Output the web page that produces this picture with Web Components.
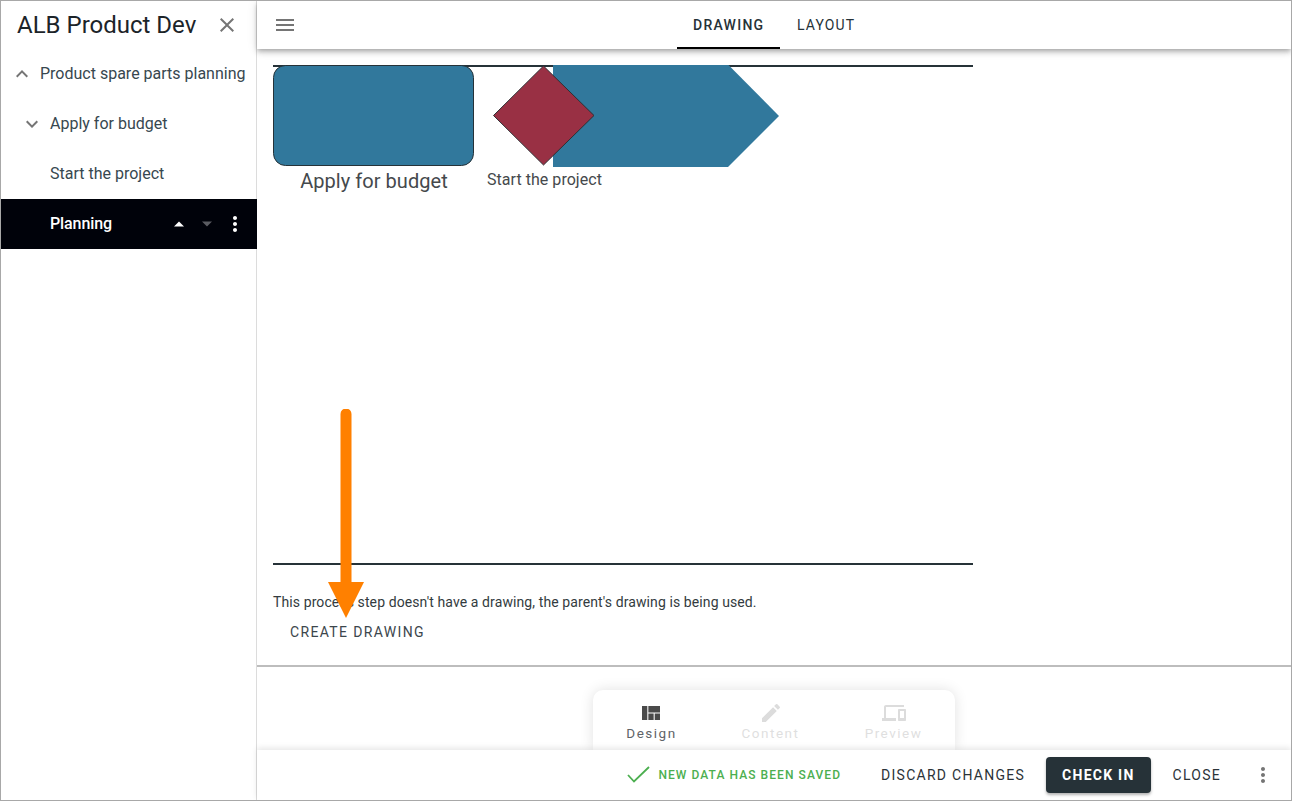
<!DOCTYPE html>
<html><head><meta charset="utf-8"><title>ALB Product Dev</title>
<style>
html,body{margin:0;padding:0;background:#fff;font-family:Roboto,"Liberation Sans",sans-serif;color:#263238}
</style></head><body>
<app-shell>
  <side-nav slot="side" heading="ALB Product Dev">
    <nav-row icon="up" indent="0">Product spare parts planning</nav-row>
    <nav-row icon="down" indent="1">Apply for budget</nav-row>
    <nav-row indent="1">Start the project</nav-row>
    <nav-row indent="1" active>Planning</nav-row>
  </side-nav>
  <top-bar slot="top"></top-bar>
  <drawing-pane slot="main"></drawing-pane>
  <mode-switch slot="modes"></mode-switch>
  <action-bar slot="actions"></action-bar>
</app-shell>
<script>
function def(name, css, html, setup){
  customElements.define(name, class extends HTMLElement{
    constructor(){super();const s=this.attachShadow({mode:'open'});s.innerHTML='<style>'+css+'</style>'+(typeof html==='function'?html(this):html);}
    connectedCallback(){ if(setup) setup(this); }
  });
}
def('app-shell',`
:host{display:flex;width:1292px;height:801px;box-sizing:border-box;border:1px solid #a8a8a8;overflow:hidden;background:#fff;position:relative}
.side{flex:0 0 256px;background:linear-gradient(#dcdcdc,#dcdcdc) right top/1px 100% no-repeat}
.body{flex:1;display:flex;flex-direction:column;min-width:0;position:relative}
.mid{flex:0 0 618px;position:relative}
.gap{flex:1;display:flex;justify-content:center;align-items:flex-end;position:relative}
.act{flex:0 0 50px;position:relative;z-index:2}
`,`<div class="side"><slot name="side"></slot></div>
<div class="body"><slot name="top"></slot><div class="mid"><slot name="main"></slot></div>
<div class="gap"><slot name="modes"></slot></div><div class="act"><slot name="actions"></slot></div></div>`);

def('side-nav',`
:host{display:block;height:100%}
header{display:flex;align-items:center;height:48px;padding-left:16px;padding-right:18px;justify-content:space-between}
h1{margin:0;font:400 24px/48px Roboto,sans-serif;color:#1c2429;letter-spacing:0}
svg{display:block}
`,el=>`<header><h1>${el.getAttribute('heading')}</h1>
<svg width="24" height="24" viewBox="0 0 24 24"><path fill="#757575" d="M19 6.41 17.59 5 12 10.59 6.41 5 5 6.41 10.59 12 5 17.59 6.41 19 12 13.41 17.59 19 19 17.59 13.41 12z"/></svg></header>
<div><slot></slot></div>`);

def('nav-row',`
:host{display:flex;align-items:center;height:50px;font:400 16px/24px Roboto,sans-serif;color:#37474f;position:relative;white-space:nowrap}
:host([active]){background:#00020a;color:#fff;font-weight:500;letter-spacing:-.1px}
.ic{width:24px;height:24px;flex:none;margin-right:6px}
svg{display:block}
.tools{margin-left:auto;display:flex;align-items:center;margin-right:10px}
`,el=>{
  const ind=+el.getAttribute('indent');
  const ic=el.getAttribute('icon');
  const pad=ind?19:9;
  const path=ic==='up'?'M7.41 15.41 12 10.83l4.59 4.58L18 14l-6-6-6 6z':'M7.41 8.59 12 13.17l4.59-4.58L18 10l-6 6-6-6z';
  const icon=ic?`<span class="ic"><svg width="24" height="24" viewBox="0 0 24 24"><path fill="#757575" d="${path}"/></svg></span>`:`<span style="width:30px;flex:none"></span>`;
  const tools=el.hasAttribute('active')?`<span class="tools">
  <svg width="22" height="24" viewBox="0 0 22 24"><path fill="#fff" d="M6 14.5l5-5 5 5z"/></svg>
  <svg width="22" height="24" viewBox="0 0 22 24" style="margin-left:6px"><path fill="#5a5c62" d="M6 9.5l5 5 5-5z"/></svg>
  <svg width="24" height="24" viewBox="0 0 24 24" style="margin-left:5px"><path fill="#fff" d="M12 8c1.100 0 2-.9 2-2s-.9-2-2-2-2 .9-2 2 .9 2 2 2zm0 2c-1.100 0-2 .9-2 2s.9 2 2 2 2-.9 2-2-.9-2-2-2zm0 6c-1.100 0-2 .9-2 2s.9 2 2 2 2-.9 2-2-.9-2-2-2z"/></svg></span>`:'';
  return `<span style="width:${pad}px;flex:none"></span>${icon}<span><slot></slot></span>${tools}`;
});

def('top-bar',`
:host{display:flex;align-items:center;height:48px;background:#fff;position:relative;z-index:3;box-shadow:0 2px 4px -1px rgba(0,0,0,.2),0 4px 5px 0 rgba(0,0,0,.14),0 1px 10px 0 rgba(0,0,0,.12)}
.menu{margin-left:16px;flex:none}
svg{display:block}
.tabs{position:absolute;left:420px;top:0;height:48px;display:flex}
.tab{height:48px;box-sizing:border-box;padding:0 16px;font:400 14px/49px Roboto,sans-serif;letter-spacing:1.15px;color:#263238}
.tab.on{border-bottom:2px solid #000;width:103px;font-weight:500;letter-spacing:1.25px}
`,`<svg class="menu" width="24" height="24" viewBox="0 0 24 24"><path fill="#757575" d="M3 18h18v-2H3v2zm0-5h18v-2H3v2zm0-7v2h18V6H3z"/></svg>
<div class="tabs"><div class="tab on">DRAWING</div><div class="tab" style="padding:0 0 0 17px">LAYOUT</div></div>`);

def('process-canvas',`
:host{display:block;position:relative;width:700px;height:500px;box-sizing:border-box;border-top:2px solid #263238;border-bottom:2px solid #263238}
svg{position:absolute;left:0;top:0;overflow:visible}
.lab{position:absolute;font-family:Roboto,sans-serif;color:#45494c;white-space:nowrap;text-align:center}
`,`<svg width="700" height="500">
<rect x=".5" y="-1.500" width="200" height="100" rx="12" fill="#31789c" stroke="#263238" stroke-width="1"/>
<polygon points="280,-2 455.500,-2 506,49 455,100 280,100" fill="#31789c"/>
<polygon points="270.500,-1 321,48.500 270.500,98 220.500,48.500" fill="#993044" stroke="#2f2f33" stroke-width="1"/>
</svg>
<div class="lab" style="left:0;width:202px;top:102px;font-size:20px;line-height:24px;letter-spacing:.05px">Apply for budget</div>
<div class="lab" style="left:214px;top:102px;font-size:16px;line-height:22px;letter-spacing:.04px">Start the project</div>`);

def('drawing-pane',`
:host{display:block;height:618px;box-sizing:border-box;border-bottom:2px solid #bdbdbd;padding:16px 0 0 16px;position:relative;background:#fff}
p{margin:0;font:400 14px/20px Roboto,sans-serif;color:#333b40;position:absolute;left:16px;top:543px;letter-spacing:.1px}
.btn{position:absolute;left:33px;top:573px;font:400 14px/20px Roboto,sans-serif;letter-spacing:1.35px;color:#3c464c}
.arrow{position:absolute;left:71px;top:360px}
`,`<process-canvas></process-canvas>
<p>This process step doesn't have a drawing, the parent's drawing is being used.</p>
<div class="btn">CREATE DRAWING</div>
<svg class="arrow" width="36" height="212" viewBox="0 0 36 212"><path fill="#ff8000" d="M12.500 5a5 5 0 0 1 11 0V173H36L18 209 0 173H12.500z"/></svg>`);

def('mode-switch',`
:host{display:flex;width:362px;height:60px;box-sizing:border-box;background:#fff;border-radius:10px 10px 0 0;box-shadow:0 0 14px rgba(0,0,0,.12)}
.m{flex:none;display:flex;flex-direction:column;align-items:center;font:400 13.5px/16px Roboto,sans-serif;letter-spacing:1.5px;padding-top:11px;color:#5f6368}
.m.off{color:#dfdfdf}
svg{display:block}
`,`<div class="m" style="width:117px"><svg width="18" height="14" viewBox="4 5 17 13" preserveAspectRatio="none" style="margin:5px 1px 5px 0"><path fill="#4a4a4a" d="M10 18h5v-6h-5v6zm-6 0h5V5H4v13zm12 0h5v-6h-5v6zM10 5v6h11V5H10z"/></svg><span>Design</span></div>
<div class="m off" style="width:121px"><svg width="24" height="24" viewBox="0 0 24 24"><path fill="#dcdcdc" d="M3 17.250V21h3.750L17.810 9.940l-3.750-3.750L3 17.250zM20.710 7.040a1 1 0 0 0 0-1.410l-2.340-2.340a1 1 0 0 0-1.410 0l-1.830 1.830 3.750 3.750 1.830-1.830z"/></svg><span>Content</span></div>
<div class="m off" style="width:125px"><svg width="24" height="24" viewBox="0 0 24 24"><path fill="#dcdcdc" d="M4 6h18V4H4c-1.100 0-2 .9-2 2v11H0v3h14v-3H4V6zm19 2h-6c-.55 0-1 .45-1 1v10c0 .55.45 1 1 1h6c.55 0 1-.45 1-1V9c0-.55-.45-1-1-1zm-1 9h-4v-7h4v7z"/></svg><span>Preview</span></div>`);

def('action-bar',`
:host{display:flex;align-items:center;justify-content:flex-end;height:50px;background:#fff;box-shadow:0 -2px 6px rgba(0,0,0,.1);font-family:Roboto,sans-serif;position:relative}
svg{display:block}
.saved{display:flex;align-items:center;color:#4caf50;font:500 12px/20px Roboto,sans-serif;letter-spacing:1.07px;margin-right:40px}
.saved svg{margin-right:6px}
.b{font:400 14px/20px Roboto,sans-serif;letter-spacing:1.27px;color:#2b3338}
.ci{background:#263238;color:#fff;border-radius:4px;height:36px;line-height:36px;padding:0 16px;margin:0 22px 0 21px;font-weight:700;letter-spacing:1.25px;box-shadow:0 2px 3px rgba(0,0,0,.3)}
.more{margin:0 16px 0 30px}
`,`<div class="saved"><svg width="26" height="24" viewBox="0 0 26 24"><path fill="none" stroke="#4caf50" stroke-width="1.8" d="M2 12 8 18.500 23 4"/></svg>NEW DATA HAS BEEN SAVED</div>
<div class="b">DISCARD CHANGES</div><div class="b ci">CHECK IN</div><div class="b">CLOSE</div>
<svg class="more" width="24" height="24" viewBox="0 0 24 24"><path fill="#757575" d="M12 8c1.100 0 2-.9 2-2s-.9-2-2-2-2 .9-2 2 .9 2 2 2zm0 2c-1.100 0-2 .9-2 2s.9 2 2 2 2-.9 2-2-.9-2-2-2zm0 6c-1.100 0-2 .9-2 2s.9 2 2 2 2-.9 2-2-.9-2-2-2z"/></svg>`);
</script>
</body></html>
